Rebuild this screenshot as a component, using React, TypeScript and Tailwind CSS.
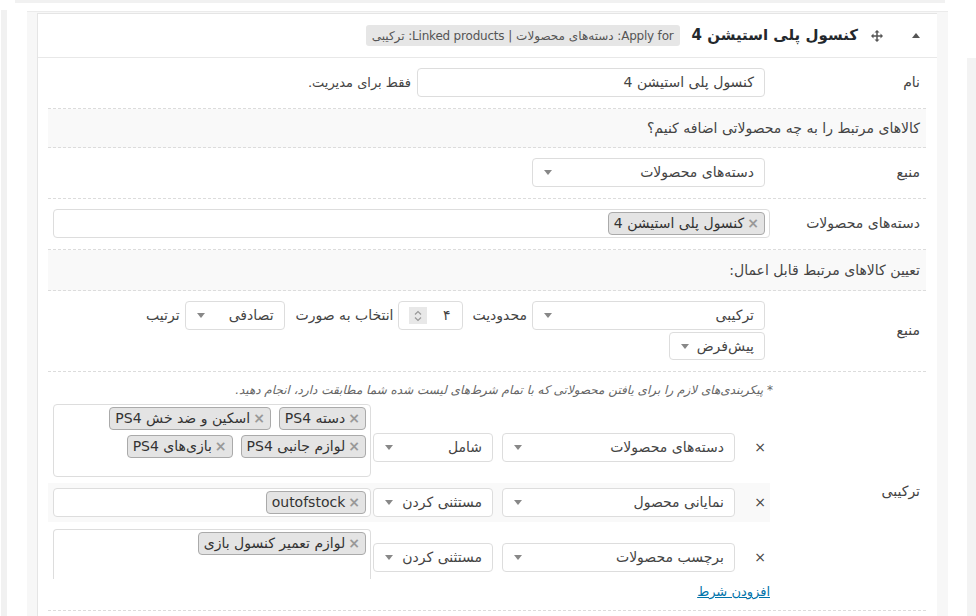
import React from 'react';

const Caret = () => (
  <span className="shrink-0 w-0 h-0 border-x-[4px] border-x-transparent border-t-[5px] border-t-[#888]" />
);

function Select({ value, className = '' }: { value: string; className?: string }) {
  return (
    <div className={`flex items-center justify-between bg-white border border-[#ddd] rounded-[4px] pr-[10px] pl-[11px] ${className}`}>
      <span className="whitespace-nowrap">{value}</span>
      <Caret />
    </div>
  );
}

const Chip = ({ label }: { label: string }) => (
  <span className="inline-flex items-center h-[23px] px-[5px] bg-[#e4e4e4] border border-[#aaa] rounded-[4px] text-[#333] whitespace-nowrap">
    <span className="text-[#999] font-bold ml-[3px]">×</span>
    {label}
  </span>
);

const MoveIcon = () => (
  <svg width="12" height="12" viewBox="0 0 12 12" fill="#555">
    <rect x="5.25" y="1.5" width="1.5" height="9" />
    <rect x="1.5" y="5.25" width="9" height="1.5" />
    <polygon points="6,0 8.5,2.5 3.5,2.5" />
    <polygon points="6,12 8.5,9.5 3.5,9.5" />
    <polygon points="0,6 2.5,3.5 2.5,8.5" />
    <polygon points="12,6 9.5,3.5 9.5,8.5" />
  </svg>
);

function Row({ label, children, className = '' }: { label: string; children: React.ReactNode; className?: string }) {
  return (
    <div className={`flex items-center border-b border-dashed border-[#dcdcdc] ${className}`}>
      <div className="w-[151px] shrink-0 pr-[6px]">{label}</div>
      <div className="flex-1">{children}</div>
    </div>
  );
}

const Heading = ({ text, h }: { text: string; h: string }) => (
  <div className={`flex items-center bg-[#f9f9f9] border-b border-dashed border-[#dcdcdc] pr-[6px] ${h}`}>{text}</div>
);

export default function App() {
  return (
    <div className="w-[976px] h-[616px] overflow-hidden bg-white text-[14px] text-[#444] font-['DejaVu_Sans',Tahoma,sans-serif]">
      <div className="h-[3px] bg-[#f1f1f1] ml-[15px] mr-[31px]" />
      <div className="flex h-[613px]">
        <div className="w-[1px]" />
        <div className="w-[6px] bg-[#f1f1f1] mt-[7px]" />
        <div className="w-[20px]" />
        <div className="w-[921px] bg-[#f7f7f7] border-t border-[#ebebeb] mt-[8px] pl-[10px] pr-[11px] pt-[1px]">
          <div dir="rtl" className="h-full bg-white border-t border-l border-[#e5e5e5]">
            {/* header */}
            <div className="flex items-center h-[44px] border-b border-[#e8e8e8] pr-[17px]">
              <span className="w-0 h-0 border-x-[4px] border-x-transparent border-b-[5px] border-b-[#555]" />
              <span className="mr-[29px] flex"><MoveIcon /></span>
              <span className="mr-[13px] text-[15px] tracking-[-0.3px] font-bold text-[#23282d]">کنسول پلی استیشن 4</span>
              <span className="mr-[12px] bg-[#e6e6e6] rounded-[3px] px-[6px] h-[21px] flex items-center text-[12px] tracking-[-0.2px] text-[#555]">
                Apply for: دسته‌های محصولات | Linked products: ترکیبی
              </span>
            </div>

            {/* body */}
            <div className="pl-[10px] pr-[11px]">
              <Row label="نام" className="pt-[10px] pb-[11px]">
                <div className="flex items-center pr-[10px]">
                  <div className="w-[348px] h-[29px] border border-[#ddd] rounded-[4px] flex items-center pr-[10px]">کنسول پلی استیشن 4</div>
                  <span className="mr-[6px] text-[13px]">فقط برای مدیریت.</span>
                </div>
              </Row>

              <Heading text="کالاهای مرتبط را به چه محصولاتی اضافه کنیم؟" h="h-[39px]" />

              <Row label="منبع" className="pt-[10px] pb-[11px]">
                <div className="pr-[10px]">
                  <Select value="دسته‌های محصولات" className="w-[233px] h-[29px]" />
                </div>
              </Row>

              <Row label="دسته‌های محصولات" className="pt-[10px] pb-[11px]">
                <div className="pr-[5px] pl-[5px]">
                  <div className="h-[29px] border border-[#ddd] rounded-[4px] flex items-center pr-[4px]">
                    <Chip label="کنسول پلی استیشن 4" />
                  </div>
                </div>
              </Row>

              <Heading text="تعیین کالاهای مرتبط قابل اعمال:" h="h-[41px]" />

              <Row label="منبع" className="pt-[10px] pb-[11px]">
                <div className="pr-[10px] flex flex-col items-start gap-[2px]">
                  <div className="flex items-center">
                    <Select value="ترکیبی" className="w-[233px] h-[29px]" />
                    <span className="mr-[5px]">محدودیت</span>
                    <div className="mr-[9px] w-[65px] h-[29px] border border-[#ddd] rounded-[4px] flex items-center justify-between pr-[12px] pl-[10px]">
                      <span>۴</span>
                      <span className="w-[18px] h-[17px] bg-[#e8e8e8] flex flex-col items-center justify-center">
                        <svg width="8" height="12" viewBox="0 0 8 12" fill="none" stroke="#999" strokeWidth="1.2">
                          <path d="M1 4.5 L4 1.5 L7 4.5" />
                          <path d="M1 7.5 L4 10.5 L7 7.5" />
                        </svg>
                      </span>
                    </div>
                    <span className="mr-[5px] tracking-[-0.3px]">انتخاب به صورت</span>
                    <Select value="تصادفی" className="mr-[11px] w-[100px] h-[29px]" />
                    <span className="mr-[5px]">ترتیب</span>
                  </div>
                  <Select value="پیش‌فرض" className="w-[96px] h-[28px]" />
                </div>
              </Row>

              {/* conditions */}
              <div className="flex items-center border-b border-dashed border-[#dcdcdc]">
                <div className="w-[151px] shrink-0 pr-[6px]">ترکیبی</div>
                <div className="flex-1 pt-[10px] pb-[10px]">
                  <div className="h-[16px] leading-[16px] pr-[2px] text-[12px] italic text-[#666]">
                    * پیکربندی‌های لازم را برای یافتن محصولاتی که با تمام شرط‌های لیست شده شما مطابقت دارد، انجام دهید.
                  </div>
                  <div className="mt-[4px] mr-[5px] w-[722px]">
                    {/* condition 1 */}
                    <div className="flex items-start h-[81px]">
                      <div className="w-[20px] h-[29px] mt-[31px] flex items-center justify-center">×</div>
                      <Select value="دسته‌های محصولات" className="mt-[31px] mr-[15px] w-[233px] h-[29px]" />
                      <Select value="شامل" className="mt-[31px] mr-[9px] w-[120px] h-[29px]" />
                      <div className="mt-[2px] mr-[2px] w-[318px] h-[73px] border border-[#ddd] rounded-[4px] pr-[4px] pt-[2px] flex flex-wrap content-start gap-x-[8px] gap-y-[5px]">
                        <Chip label="دسته PS4" />
                        <Chip label="اسکین و ضد خش PS4" />
                        <Chip label="لوازم جانبی PS4" />
                        <Chip label="بازی‌های PS4" />
                      </div>
                    </div>
                    {/* condition 2 */}
                    <div className="flex items-start h-[39px] bg-[#f9f9f9]">
                      <div className="w-[20px] h-[29px] mt-[5px] flex items-center justify-center">×</div>
                      <Select value="نمایانی محصول" className="mt-[5px] mr-[15px] w-[233px] h-[29px]" />
                      <Select value="مستثنی کردن" className="mt-[5px] mr-[9px] w-[120px] h-[29px]" />
                      <div className="mt-[5px] mr-[2px] w-[318px] h-[29px] bg-white border border-[#ddd] rounded-[4px] pr-[4px] flex items-center">
                        <Chip label="outofstock" />
                      </div>
                    </div>
                    {/* condition 3 */}
                    <div className="flex items-start h-[59px]">
                      <div className="w-[20px] h-[29px] mt-[21px] flex items-center justify-center">×</div>
                      <Select value="برچسب محصولات" className="mt-[21px] mr-[15px] w-[233px] h-[29px]" />
                      <Select value="مستثنی کردن" className="mt-[21px] mr-[9px] w-[120px] h-[29px]" />
                      <div className="mt-[7px] mr-[2px] w-[318px] h-[50px] border border-b-0 border-[#ddd] rounded-t-[4px] pr-[4px] pt-[2px] flex flex-wrap content-start">
                        <Chip label="لوازم تعمیر کنسول بازی" />
                      </div>
                    </div>
                  </div>
                  <div className="mt-[3px] mr-[5px] h-[16px] leading-[16px] text-[13px]">
                    <a href="#" className="text-[#0073aa] underline">افزودن شرط</a>
                  </div>
                </div>
              </div>
            </div>
          </div>
        </div>
        <div className="w-[19px]" />
        <div className="w-[9px] bg-[#f3f3f3] mt-[55px]" />
      </div>
    </div>
  );
}
